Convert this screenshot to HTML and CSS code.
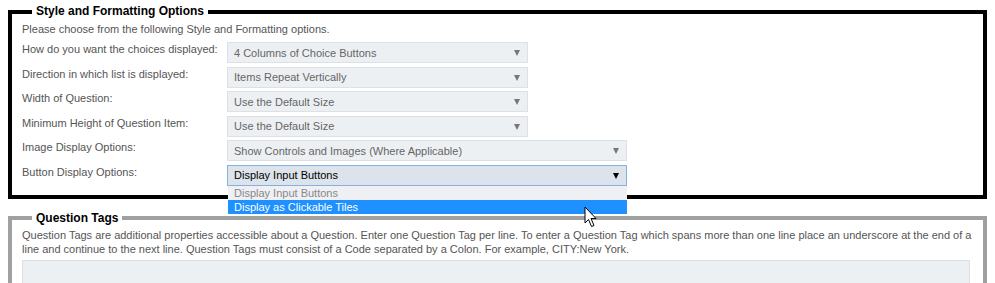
FILE: index.html
```html
<!DOCTYPE html>
<html lang="en">
<head>
  <meta charset="UTF-8">
  <meta name="viewport" content="width=device-width, initial-scale=1.0">
  <title>Style and Formatting Options</title>
  <link rel="stylesheet" href="styles.css">
</head>
<body>

  <!-- Style and formatting -->
  <fieldset class="panel panel-dark">
    <legend>Style and Formatting Options</legend>
    <p class="intro">Please choose from the following Style and Formatting options.</p>

    <div class="options">
      <label for="columns">How do you want the choices displayed:</label>
      <div class="select">
        <select id="columns"><option>4 Columns of Choice Buttons</option></select>
      </div>

      <label for="direction">Direction in which list is displayed:</label>
      <div class="select">
        <select id="direction"><option>Items Repeat Vertically</option></select>
      </div>

      <label for="width">Width of Question:</label>
      <div class="select">
        <select id="width"><option>Use the Default Size</option></select>
      </div>

      <label for="height">Minimum Height of Question Item:</label>
      <div class="select">
        <select id="height"><option>Use the Default Size</option></select>
      </div>

      <label for="images">Image Display Options:</label>
      <div class="select wide">
        <select id="images"><option>Show Controls and Images (Where Applicable)</option></select>
      </div>

      <label for="buttons">Button Display Options:</label>
      <div class="select wide open">
        <select id="buttons">
          <option>Display Input Buttons</option>
          <option>Display as Clickable Tiles</option>
        </select>
        <!-- open list of the select -->
        <ul class="dropdown">
          <li>Display Input Buttons</li>
          <li class="hover">Display as Clickable Tiles</li>
        </ul>
        <svg class="cursor" width="14" height="22" viewBox="0 0 14 22">
          <path d="M1 1 L1 17 L4.5 13.5 L7.5 20.5 L10 19.5 L7 12.5 L12 12.5 Z" fill="#fff" stroke="#000" stroke-width="1"/>
        </svg>
      </div>
    </div>
  </fieldset>

  <!-- Question tags -->
  <fieldset class="panel panel-light">
    <legend>Question Tags</legend>
    <p class="intro">Question Tags are additional properties accessible about a Question. Enter one Question Tag per line. To enter a Question Tag which spans more than one line place an underscore at the end of a line and continue to the next line. Question Tags must consist of a Code separated by a Colon. For example, CITY:New York.</p>
    <textarea class="tags" rows="4"></textarea>
  </fieldset>

</body>
</html>
```

FILE: styles.css
```css
body {
  font-family: "Liberation Sans", Arial, sans-serif;
  font-size: 11px;
  color: #555;
  background-color: #fff;
  margin: 0;
  padding: 4px 8px 0;
}
.panel {
  margin: 0 0 12px;
  padding: 0 10px 9px;
  border: 4px solid #000;
}
.panel-light {
  border-color: #a0a0a0;
}
legend {
  margin-left: 10px;
  padding: 0 4px;
  font-size: 12px;
  font-weight: bold;
  color: #000;
  line-height: 15px;
}
.intro {
  margin: 3px 0 6px;
  line-height: 14px;
}
.panel-light .intro {
  margin: 2px 0 4px;
}
.options {
  display: grid;
  grid-template-columns: 205px auto;
  row-gap: 3.6px;
  align-items: start;
}
.options label {
  padding-top: 0;
  line-height: 14px;
}
.select {
  position: relative;
  width: 301px;
}
.select.wide {
  width: 400px;
}
.select select {
  appearance: none;
  -webkit-appearance: none;
  display: block;
  width: 100%;
  height: 21px;
  margin: 0;
  padding: 0 20px 0 6px;
  font-family: inherit;
  font-size: 11px;
  color: #666;
  background-color: #edf0f3;
  border: 1px solid #dde0e4;
  border-radius: 0;
  outline: none;
}
.select::after {
  content: "";
  position: absolute;
  right: 8px;
  top: 8px;
  border-left: 3.5px solid transparent;
  border-right: 3.5px solid transparent;
  border-top: 6px solid #777;
}
.select.open select {
  color: #000;
  background-color: #dce3ea;
  border-color: #86aee8;
}
.select.open::after {
  border-top-color: #000;
}
.dropdown {
  position: absolute;
  left: 1px;
  right: 0;
  top: 21px;
  margin: 0;
  padding: 0;
  list-style: none;
  background-color: #eef0f3;
  z-index: 2;
}
.dropdown li {
  height: 14px;
  line-height: 14px;
  padding-left: 6px;
  color: #888;
}
.dropdown li.hover {
  background-color: #1e90ff;
  color: #fff;
}
.cursor {
  position: absolute;
  left: 357px;
  top: 41px;
  z-index: 3;
}
.tags {
  display: block;
  box-sizing: border-box;
  width: calc(100% - 3px);
  height: 60px;
  margin-top: 0;
  background-color: #edf0f3;
  border: 1px solid #dde0e4;
  resize: none;
}
```
